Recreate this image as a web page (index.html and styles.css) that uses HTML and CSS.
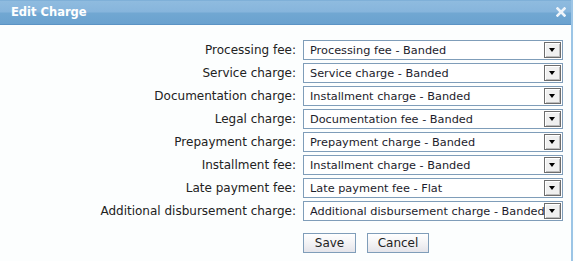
FILE: index.html
```html
<!DOCTYPE html>
<html lang="en">
<head>
  <meta charset="UTF-8">
  <title>Edit Charge</title>
  <link rel="stylesheet" href="styles.css">
</head>
<body>
  <div class="dialog">
    <div class="titlebar">
      <span class="title">Edit Charge</span>
      <svg class="close" width="10" height="10" viewBox="0 0 10 10">
        <path d="M1.5 1.5 L8.5 8.5 M8.5 1.5 L1.5 8.5" stroke="#eef4fa" stroke-width="2.6" stroke-linecap="square"/>
      </svg>
    </div>

    <div class="content">
      <div class="form">
        <label>Processing fee:</label>
        <div class="select"><span>Processing fee - Banded</span><i class="arrow"></i></div>

        <label>Service charge:</label>
        <div class="select"><span>Service charge - Banded</span><i class="arrow"></i></div>

        <label>Documentation charge:</label>
        <div class="select"><span>Installment charge - Banded</span><i class="arrow"></i></div>

        <label>Legal charge:</label>
        <div class="select"><span>Documentation fee - Banded</span><i class="arrow"></i></div>

        <label>Prepayment charge:</label>
        <div class="select"><span>Prepayment charge - Banded</span><i class="arrow"></i></div>

        <label>Installment fee:</label>
        <div class="select"><span>Installment charge - Banded</span><i class="arrow"></i></div>

        <label>Late payment fee:</label>
        <div class="select"><span>Late payment fee - Flat</span><i class="arrow"></i></div>

        <label>Additional disbursement charge:</label>
        <div class="select"><span>Additional disbursement charge - Banded</span><i class="arrow"></i></div>

        <div></div>
        <div class="buttons">
          <button class="btn-save">Save</button>
          <button class="btn-cancel">Cancel</button>
        </div>
      </div>
    </div>
  </div>
</body>
</html>
```

FILE: styles.css
```css
body {
  margin: 0;
  background: #fcfefe;
  font-family: "DejaVu Sans", Verdana, sans-serif;
  font-size: 12px;
  color: #222;
}

.dialog {
  width: 573px;
  height: 261px;
  box-sizing: border-box;
  border-right: 2px solid #9cc5e6;
  background: #fcfefe;
}

.titlebar {
  height: 25px;
  box-sizing: border-box;
  display: flex;
  align-items: center;
  justify-content: space-between;
  padding: 0 5px 1px 11px;
  background: linear-gradient(to bottom, #8fbbdf 0%, #86b5dc 48%, #71a7d2 52%, #6aa2cf 100%);
  border-top: 1px solid #7fb0d8;
  border-bottom: 1px solid #5b93c4;
}

.title {
  color: #fff;
  font-weight: bold;
  font-size: 11.5px;
}

.close {
  display: block;
}

.content {
  padding: 15px 8px 0 0;
}

.form {
  display: grid;
  grid-template-columns: auto 260px;
  justify-content: end;
  column-gap: 7px;
  row-gap: 3px;
  align-items: center;
}

.form label {
  text-align: right;
  color: #222;
}

.select {
  height: 20px;
  box-sizing: border-box;
  border: 1px solid #7f9db9;
  background: #fff;
  display: flex;
  align-items: center;
  padding-left: 6px;
  padding-right: 1px;
  font-size: 11.3px;
  color: #1c1c2c;
  overflow: hidden;
}

.select span {
  flex: 1;
  white-space: nowrap;
  overflow: hidden;
}

.arrow {
  width: 17px;
  height: 16px;
  box-sizing: border-box;
  border: 1px solid #6d6d6d;
  background: #f0f0f0;
  box-shadow: inset 1px 1px 0 #fff, inset -1px -1px 0 #bdbdbd;
  position: relative;
  flex: none;
}

.arrow::after {
  content: "";
  position: absolute;
  left: 4px;
  top: 5px;
  border-left: 3.5px solid transparent;
  border-right: 3.5px solid transparent;
  border-top: 4px solid #000;
}

.buttons {
  display: flex;
  gap: 11px;
  margin-top: 9px;
}

button {
  height: 20px;
  box-sizing: border-box;
  border: 1px solid #7f9db9;
  background: linear-gradient(to bottom, #ffffff 0%, #f3f3f5 50%, #e4e4ea 100%);
  font-family: "DejaVu Sans", Verdana, sans-serif;
  font-size: 12px;
  color: #222;
  padding: 0;
}

.btn-save {
  width: 53px;
}

.btn-cancel {
  width: 62px;
}
```
